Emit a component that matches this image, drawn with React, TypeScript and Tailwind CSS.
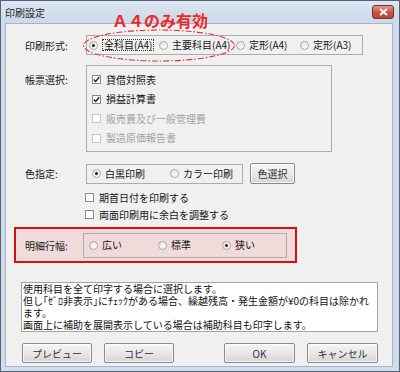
import React from "react";

const FONT = "font-['Noto_Sans_CJK_JP','Noto_Sans',sans-serif]";

function Radio({ label, checked = false, focus = false }: { label: string; checked?: boolean; focus?: boolean }) {
  return (
    <span className="flex items-center gap-[4px]">
      <span className="flex h-[9px] w-[9px] shrink-0 items-center justify-center rounded-full border border-[#a8a8a8] bg-gradient-to-br from-[#e2e2e2] to-white">
        {checked ? <span className="h-[3px] w-[3px] rounded-full bg-[#1c1c1c]" /> : null}
      </span>
      <span className={focus ? "border border-dotted border-[#333] px-[1px] leading-[10px]" : "leading-[10px]"}>{label}</span>
    </span>
  );
}

function Check({ label, checked = false, disabled = false }: { label: string; checked?: boolean; disabled?: boolean }) {
  return (
    <span className={`flex items-center gap-[5px] ${disabled ? "text-[#a3a3a3]" : ""}`}>
      <span
        className={`flex h-[9px] w-[9px] shrink-0 items-center justify-center border bg-white ${
          disabled ? "border-[#c4c4c4] bg-[#f4f4f4]" : "border-[#8b8b8b]"
        }`}
      >
        {checked ? (
          <svg width="7" height="7" viewBox="0 0 7 7">
            <path d="M0.8 3.4 L2.7 5.4 L6.2 1.2" fill="none" stroke="#1f1f1f" strokeWidth="1.4" />
          </svg>
        ) : null}
      </span>
      <span className="leading-[10px]">{label}</span>
    </span>
  );
}

function Btn({ label, className = "" }: { label: string; className?: string }) {
  return (
    <div
      className={`flex h-[20px] items-center justify-center rounded-[2px] border border-[#8a8a8a] bg-gradient-to-b from-[#f6f6f6] via-[#e8e8e8] to-[#d4d4d4] text-[#333] shadow-[inset_0_0_0_1px_rgba(255,255,255,0.7)] ${className}`}
    >
      {label}
    </div>
  );
}

export default function App() {
  return (
    <div className={`relative flex h-[372px] w-[400px] flex-col border border-[#52647a] bg-[#d1dcea] text-[10px] text-[#161616] ${FONT}`}>
      {/* title bar */}
      <div className="flex h-[22px] items-center justify-between bg-gradient-to-b from-[#dde6f1] to-[#cbd8e8] pl-[4px] pr-[5px]">
        <span className="text-[10px] text-[#1d1d1d]">印刷設定</span>
        <div className="flex h-[14px] w-[22px] items-center justify-center rounded-[3px] border border-[#7b2e25] bg-gradient-to-b from-[#e39a8e] via-[#c8564a] to-[#b8433a]">
          <svg width="9" height="8" viewBox="0 0 9 8">
            <path d="M1 1 L8 7 M8 1 L1 7" stroke="white" strokeWidth="1.8" />
          </svg>
        </div>
      </div>

      {/* client area */}
      <div className="relative mb-[4px] ml-[4px] mr-[6px] flex flex-1 flex-col border border-[#a7b5c8] bg-[#f0f0f0]">
        {/* 印刷形式 */}
        <div className="ml-[19px] mt-[11px] flex h-[20px] items-center">
          <span className="w-[61px]">印刷形式:</span>
          <div className="flex h-[20px] w-[277px] items-center border border-[#acacac] pl-[2px]">
            <div className="w-[70px]">
              <Radio label="全科目(A4)" checked focus />
            </div>
            <div className="w-[77px]">
              <Radio label="主要科目(A4)" />
            </div>
            <div className="w-[64px]">
              <Radio label="定形(A4)" />
            </div>
            <Radio label="定形(A3)" />
          </div>
        </div>

        {/* 帳票選択 */}
        <div className="ml-[19px] mt-[10px] flex items-start">
          <span className="w-[61px] pt-[7px]">帳票選択:</span>
          <div className="flex h-[87px] w-[246px] flex-col border border-[#acacac] pl-[5px] pt-[4px]">
            <div className="flex h-[19.5px] items-center">
              <Check label="貸借対照表" checked />
            </div>
            <div className="flex h-[19.5px] items-center">
              <Check label="損益計算書" checked />
            </div>
            <div className="flex h-[19.5px] items-center">
              <Check label="販売費及び一般管理費" disabled />
            </div>
            <div className="flex h-[19.5px] items-center">
              <Check label="製造原価報告書" disabled />
            </div>
          </div>
        </div>

        {/* 色指定 */}
        <div className="ml-[19px] mt-[11px] flex h-[21px] items-center">
          <span className="w-[61px]">色指定:</span>
          <div className="flex h-[20px] w-[157px] items-center border border-[#acacac] pl-[5px]">
            <div className="w-[78px]">
              <Radio label="白黒印刷" checked />
            </div>
            <Radio label="カラー印刷" />
          </div>
          <Btn label="色選択" className="ml-[7px] h-[21px] w-[45px]" />
        </div>

        {/* options */}
        <div className="ml-[79px] mt-[5px] flex flex-col">
          <div className="flex h-[17px] items-center">
            <Check label="期首日付を印刷する" />
          </div>
          <div className="flex h-[17px] items-center">
            <Check label="両面印刷用に余白を調整する" />
          </div>
        </div>

        {/* 明細行幅 */}
        <div className="ml-[8px] mt-[4px] flex h-[36px] w-[283px] items-center border-2 border-[#d70f0f] bg-[#f1dada] pl-[9px]">
          <span className="w-[58px]">明細行幅:</span>
          <div className="flex h-[25px] w-[204px] items-center border border-[#acacac] pl-[5px]">
            <div className="w-[69px]">
              <Radio label="広い" />
            </div>
            <div className="w-[64px]">
              <Radio label="標準" />
            </div>
            <Radio label="狭い" checked />
          </div>
        </div>

        {/* description */}
        <div className="ml-[15px] mt-[19px] flex h-[50px] w-[357px] flex-col border border-[#a3a3a3] bg-white px-[1px] text-[#111]">
          <div className="h-[12px] leading-[12px]">使用科目を全て印字する場合に選択します。</div>
          <div className="h-[12px] whitespace-nowrap leading-[12px]">但し｢ｾﾞﾛ非表示｣にﾁｪｯｸがある場合、繰越残高・発生金額が¥0の科目は除かれ</div>
          <div className="h-[12px] leading-[12px]">ます。</div>
          <div className="h-[12px] leading-[12px]">画面上に補助を展開表示している場合は補助科目も印字します。</div>
        </div>

        {/* buttons */}
        <div className="ml-[16px] mt-[11px] flex">
          <Btn label="プレビュー" className="w-[70px]" />
          <Btn label="コピー" className="ml-[12px] w-[70px]" />
          <Btn label="OK" className="ml-[50px] w-[71px]" />
          <Btn label="キャンセル" className="ml-[12px] w-[71px]" />
        </div>
      </div>

      {/* annotation overlay */}
      <span className="absolute left-[111px] top-[10px] text-[16px] font-bold leading-[18px] text-[#ea2a2a]">Ａ４のみ有効</span>
      <svg className="absolute left-[80px] top-[27px]" width="156" height="35" viewBox="0 0 156 35">
        <ellipse cx="78" cy="17.5" rx="75.5" ry="15.5" fill="none" stroke="#e53030" strokeWidth="1.1" strokeDasharray="6 2 1.5 2" />
      </svg>
    </div>
  );
}
